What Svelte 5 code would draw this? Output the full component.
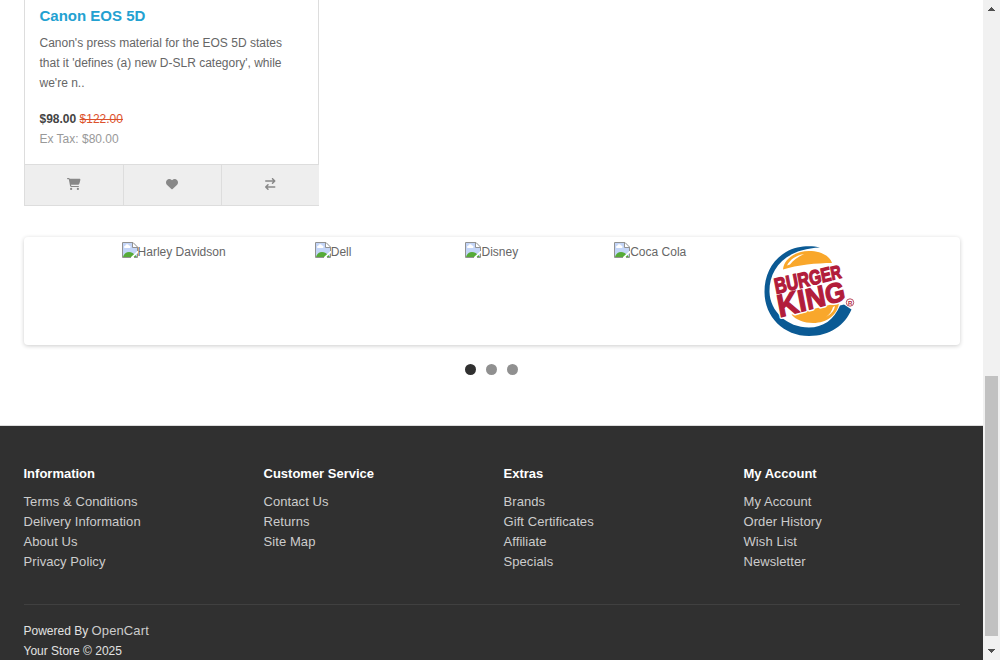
<script>
  const brands = [
    { name: 'Harley Davidson', width: 104 },
    { name: 'Dell', width: 36 },
    { name: 'Disney', width: 53 },
    { name: 'Coca Cola', width: 74 }
  ];
  const columns = [
    { title: 'Information', links: ['Terms & Conditions', 'Delivery Information', 'About Us', 'Privacy Policy'] },
    { title: 'Customer Service', links: ['Contact Us', 'Returns', 'Site Map'] },
    { title: 'Extras', links: ['Brands', 'Gift Certificates', 'Affiliate', 'Specials'] },
    { title: 'My Account', links: ['My Account', 'Order History', 'Wish List', 'Newsletter'] }
  ];
</script>

<div class="window">
  <div class="page">
    <main>
      <article class="card">
        <div class="content">
          <h4>Canon EOS 5D</h4>
          <p>Canon's press material for the EOS 5D states<br />that it 'defines (a) new D-SLR category', while<br />we're n..</p>
          <div class="price">
            <div><strong>$98.00</strong> <span class="old">$122.00</span></div>
            <div class="tax">Ex Tax: $80.00</div>
          </div>
        </div>
        <div class="actions">
          <button aria-label="Add to Cart">
            <svg width="13.5" height="12" viewBox="0 0 576 512"><path d="M0 24C0 10.700 10.700 0 24 0H69.500c22 0 41.500 12.800 50.600 32h411c26.300 0 45.500 25 38.600 50.400l-41 152.300c-8.500 31.400-37 53.300-69.500 53.300H170.700l5.400 28.500c2.200 11.300 12.100 19.500 23.600 19.500H488c13.300 0 24 10.700 24 24s-10.700 24-24 24H199.700c-34.600 0-64.300-24.600-70.700-58.500L77.400 54.500c-.7-3.800-4-6.500-7.900-6.500H24C10.700 48 0 37.300 0 24zM128 464a48 48 0 1 1 96 0 48 48 0 1 1 -96 0zm336-48a48 48 0 1 1 0 96 48 48 0 1 1 0-96z" /><path d="M105 48h440l-45 208H145z" /></svg>
          </button>
          <button aria-label="Add to Wish List">
            <svg class="heart" width="12" height="12" viewBox="0 0 512 512"><path d="M47.600 300.400L228.300 469.100c7.500 7 17.400 10.900 27.700 10.900s20.200-3.900 27.700-10.900L464.400 300.400c30.400-28.300 47.600-68 47.600-109.500v-5.800c0-69.900-50.500-129.500-119.400-141C347 36.500 300.600 51.400 268 84L256 96 244 84c-32.600-32.600-79-47.500-124.600-39.900C50.500 55.600 0 115.200 0 185.100v5.800c0 41.500 17.200 81.200 47.600 109.500z" /></svg>
          </button>
          <button aria-label="Compare this Product">
            <svg width="10.500" height="12" viewBox="0 0 448 512"><path d="M438.600 150.600c12.500-12.500 12.500-32.800 0-45.300l-96-96c-12.500-12.500-32.800-12.500-45.300 0s-12.500 32.800 0 45.300L338.700 96 32 96C14.300 96 0 110.300 0 128s14.300 32 32 32l306.700 0-41.400 41.400c-12.500 12.500-12.500 32.800 0 45.300s32.800 12.500 45.300 0l96-96zm-333.300 352c12.500 12.500 32.800 12.500 45.300 0s12.500-32.800 0-45.300L109.300 416 416 416c17.700 0 32-14.300 32-32s-14.300-32-32-32l-306.700 0 41.400-41.400c12.500-12.500 12.500-32.800 0-45.300s-32.800-12.500-45.300 0l-96 96c-12.500 12.500-12.500 32.800 0 45.300l96 96z" /></svg>
          </button>
        </div>
      </article>

      <section class="carousel">
        {#each brands as brand}
          <div class="slide">
            <div class="missing" style="width: {brand.width}px">
              <svg width="16" height="16" viewBox="0 0 16 16">
                <path fill="#c3d5f8" d="M1 1h10l4 4v10H1z" />
                <path fill="#fff" d="M2.500 6a1.300 1.300 0 0 1 .8-2.300A2 2 0 0 1 7 3.500 1.400 1.400 0 0 1 8 6zM11 1l4 4h-4z" />
                <path fill="#56ab38" d="M1 15c1-3 3-5 6-5 3 0 5 1.500 8 5z" />
                <path fill="#fff" d="M16 8.500V10.500L10.500 16H8z" />
                <path fill="none" stroke="#929292" d="M9 15.500H.5V.5H11l4.500 4.500v4M10.500 1v4.500h5M15.500 11.500v4H12" />
              </svg><span>{brand.name}</span>
            </div>
          </div>
        {/each}
        <div class="slide">
          <svg class="bk" width="100" height="100" viewBox="0 0 100 100" role="img" aria-label="Burger King">
            <path fill="#0b5a94" d="M60 6.500C51 4.500 37 4.500 26 11 12 19 4.500 34 4.500 51c0 25 19.500 44 44.500 44 21 0 36-11 42.500-26.500L84 63.500l-4 1C74 79 63 86.500 49 86.500 27 86.500 10 70 9.500 51 9 29 24 8 60 6.500z" />
            <path fill="#f9a72b" d="M23 28.500C24 17 37 10 49 10c12 0 21 5 23 12-15 0-35 2-49 6.500z" />
            <path fill="#fff" d="M27 24.500c3-6 9-10 17-11.500-6 3-11 6-14 10.500z" />
            <path fill="#f9a72b" d="M31.500 73.500L79 61.500c-1 12-12 20.500-26 20.500-9 0-17-3-21.500-8.500z" />
            <path fill="#fff" d="M66 76c5-3 8-6 9-11l-2 1c-1 4-3 7-7 10z" />
            {#each ['edge', 'face'] as layer}
              <g class={layer}>
                <text transform="translate(16 53) rotate(-11) skewY(-3) scale(1 1.150)" textLength="68" lengthAdjust="spacingAndGlyphs"><tspan font-size="19">B</tspan><tspan font-size="18.500">U</tspan><tspan font-size="18">R</tspan><tspan font-size="17.500">G</tspan><tspan font-size="17">E</tspan><tspan font-size="16">R</tspan></text>
                <text transform="translate(19.500 76.500) rotate(-11) skewY(-4) scale(1 1.050)" textLength="69" lengthAdjust="spacingAndGlyphs"><tspan font-size="30">K</tspan><tspan font-size="29">I</tspan><tspan font-size="28">N</tspan><tspan font-size="26">G</tspan></text>
              </g>
            {/each}
            <circle cx="90" cy="61.500" r="3.700" fill="#fff" stroke="#b94a60" stroke-width="1" />
            <text x="88" y="63.600" font-size="6" font-weight="700" fill="#b21d3b">R</text>
          </svg>
        </div>
      </section>
      <div class="dots"><i class="active"></i><i></i><i></i></div>
    </main>

    <footer>
      <div class="columns">
        {#each columns as col}
          <div>
            <h5>{col.title}</h5>
            <ul>
              {#each col.links as link}<li>{link}</li>{/each}
            </ul>
          </div>
        {/each}
      </div>
      <p class="powered">Powered By <span>OpenCart</span><br />Your Store © 2025</p>
    </footer>
  </div>

  <div class="scrollbar">
    <svg width="7" height="4" viewBox="0 0 7 4" shape-rendering="crispEdges"><path d="M3 0h1v1h1v1h1v1h1v1H0V3h1V2h1V1h1z" /></svg>
    <div class="thumb"></div>
    <svg width="7" height="4" viewBox="0 0 7 4" shape-rendering="crispEdges"><path d="M0 0h7v1H6v1H5v1H4v1H3V3H2V2H1V1H0z" /></svg>
  </div>
</div>

<style>
  :global(body) { margin: 0; overflow: hidden; }
  .window {
    display: flex; width: 1000px; height: 660px; overflow: hidden; background: #fff;
    font: 12px/20px "Liberation Sans", Arial, sans-serif; color: #666;
  }
  .window :global(*) { box-sizing: border-box; }
  .page { width: 983px; display: flex; flex-direction: column; }
  main { height: 425px; flex: none; padding: 0 23px 0 24px; }
  .card { width: 295px; height: 206px; display: flex; flex-direction: column; }
  .content { height: 164px; border: solid #ddd; border-width: 0 1px; padding: 6px 0 0 14.5px; white-space: nowrap; }
  h4 { margin: 0 0 7px; font-size: 15px; line-height: 20px; color: #23a1d1; }
  .content p { margin: 0; }
  .price { margin-top: 16px; color: #444; }
  .old { color: #dc512c; text-decoration: line-through; }
  .tax { color: #999; }
  .actions { height: 42px; display: grid; grid-template-columns: 99px 98px 97px; border: solid #ddd; border-width: 1px 0 1px 1px; background: #eee; }
  button { display: flex; align-items: center; justify-content: center; padding: 0 0 2px; border: 0; border-right: 1px solid #ddd; background: #eee; }
  button:last-child { border-right: 0; }
  button svg { fill: #888; }
  .heart { margin-right: 1px; }
  .carousel { margin-top: 31px; height: 108px; padding: 0 70px; display: grid; grid-template-columns: repeat(5, 1fr); border-radius: 4px; box-shadow: 0 1px 4px rgba(0, 0, 0, .2); }
  .slide { display: flex; justify-content: center; align-items: flex-start; padding-top: 5px; }
  .missing { display: flex; white-space: nowrap; }
  .missing svg { flex: none; }
  .missing span { line-height: 20px; }
  .bk { flex: none; margin-top: -1px; font-family: "Liberation Sans", Arial, sans-serif; font-weight: 700; }
  .edge { fill: #fff; stroke: #fff; stroke-width: 4px; stroke-linejoin: round; }
  .face { fill: #b21d3b; stroke: #b21d3b; stroke-width: 1.2px; }
  .dots { display: flex; justify-content: center; gap: 10px; margin-top: 19px; padding-right: 1px; }
  .dots i { width: 11px; height: 11px; border-radius: 50%; background: #909090; }
  .dots .active { background: #303030; }
  footer { flex: 1; border-top: 1px solid #ddd; background: #303030; padding: 38px 23px 0 23.5px; color: #e2e2e2; white-space: nowrap; }
  .columns { display: grid; grid-template-columns: repeat(4, 240px); height: 141px; width: 936.5px; border-bottom: 1px solid #404040; }
  h5 { margin: 0 0 8px; font-size: 13px; line-height: 20px; color: #fff; }
  ul { list-style: none; margin: 0; padding: 0; color: #ccc; font-size: 13px; letter-spacing: .08px; }
  .powered { margin: 16px 0 0; }
  .powered span { color: #ccc; font-size: 13px; letter-spacing: .12px; }
  .scrollbar { width: 17px; background: #f1f1f1; display: flex; flex-direction: column; align-items: center; }
  .scrollbar svg { flex: none; margin-top: 7px; fill: #505050; }
  .thumb { width: 13px; height: 260px; margin: 365px 2px 6px; background: #c1c1c1; }
</style>
